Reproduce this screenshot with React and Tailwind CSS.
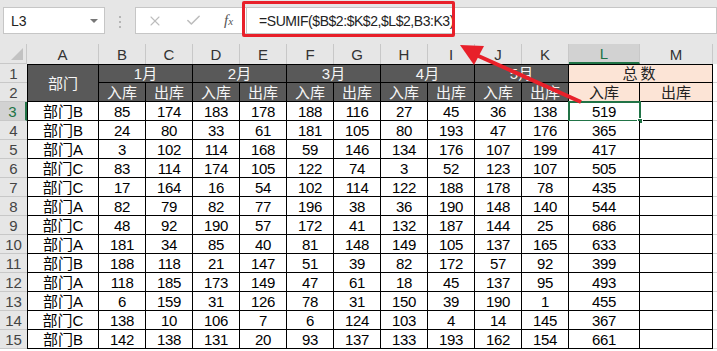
import React from "react";
import { X, Check } from "lucide-react";

const letters = ["A", "B", "C", "D", "E", "F", "G", "H", "I", "J", "K", "L", "M"];
const months = ["1月", "2月", "3月", "4月", "5月"];

const rows = [
  ["部门B", 85, 174, 183, 178, 188, 116, 27, 45, 36, 138, 519],
  ["部门B", 24, 80, 33, 61, 181, 105, 80, 193, 47, 176, 365],
  ["部门A", 3, 102, 114, 168, 59, 146, 134, 176, 107, 199, 417],
  ["部门C", 83, 114, 174, 105, 122, 74, 3, 52, 123, 107, 505],
  ["部门C", 17, 164, 16, 54, 102, 114, 122, 188, 178, 78, 435],
  ["部门A", 82, 79, 82, 77, 196, 38, 36, 190, 148, 140, 544],
  ["部门C", 48, 92, 190, 57, 172, 41, 132, 187, 144, 25, 686],
  ["部门A", 181, 34, 85, 40, 81, 148, 149, 105, 137, 165, 633],
  ["部门B", 188, 118, 21, 147, 51, 39, 82, 172, 57, 92, 399],
  ["部门A", 118, 185, 173, 149, 47, 61, 18, 45, 137, 95, 493],
  ["部门A", 6, 159, 31, 126, 78, 31, 150, 39, 190, 1, 455],
  ["部门C", 138, 10, 106, 7, 6, 124, 103, 4, 14, 145, 367],
  ["部门B", 142, 138, 131, 20, 93, 137, 133, 193, 162, 154, 661],
];

const RowNum = ({ n, active }) => (
  <div
    className={
      active
        ? "flex items-center justify-center border-b border-r-2 border-b-[#c8c8c8] border-r-[#217346] bg-[#d2d2d2] text-[#217346]"
        : "flex items-center justify-center border-b border-[#c8c8c8] bg-[#e6e6e6] text-[#444]"
    }
  >
    {n}
  </div>
);

const FormulaBar = () => (
  <div className="relative flex h-[44px] items-start bg-[#e6e6e6] pl-[3px] pt-[7px]">
    <div className="relative flex h-[27px] w-[102px] items-center border border-[#c6c6c6] bg-white pl-[7px] text-[14px] text-[#222]">
      L3
      <span className="absolute right-[6px] top-[11px] h-0 w-0 border-x-[4px] border-t-[4px] border-x-transparent border-t-[#777]" />
    </div>
    <div className="ml-[14px] mt-[9px] flex flex-col gap-[3px]">
      <span className="h-[2px] w-[2px] bg-[#b5b5b5]" />
      <span className="h-[2px] w-[2px] bg-[#b5b5b5]" />
      <span className="h-[2px] w-[2px] bg-[#b5b5b5]" />
    </div>
    <div className="ml-[14px] flex h-[27px] flex-1 items-center border border-[#c6c6c6] bg-white">
      <X className="ml-[11px] h-[16px] w-[16px] text-[#bdbdbd]" strokeWidth={1.6} />
      <Check className="ml-[22px] h-[17px] w-[17px] text-[#bdbdbd]" strokeWidth={2.2} />
      <span className="ml-[22px] font-['Liberation_Serif'] text-[15px] italic text-[#555]">
        f<span className="text-[11px]">x</span>
      </span>
      <div className="ml-[13px] flex h-full flex-1 items-center border-l border-[#c6c6c6] pl-[12px] text-[14px] tracking-[-0.45px] text-[#222]">
        =SUMIF($B$2:$K$2,$L$2,B3:K3)
      </div>
    </div>
    <div className="absolute left-[242px] top-[1px] h-[36px] w-[213px] rounded-[2px] border-[3px] border-[#e8202a]" />
  </div>
);

const dark = "flex items-center justify-center bg-[#595959] text-[#f5f5f5] border-r border-b border-black";
const peach = "flex items-center justify-center bg-[#fce4d6] text-[#222] border-r border-b border-black";
const cell = "flex items-center justify-center bg-white text-black border-r border-b border-black";

export default function App() {
  return (
    <div className="relative h-[351px] w-[717px] overflow-hidden bg-white font-['Liberation_Sans','Noto_Sans_CJK_SC',sans-serif] text-[15px] leading-none">
      <FormulaBar />
      <div className="grid grid-cols-[27px_72px_repeat(10,47px)_71px_73px_1fr] grid-rows-[20px_repeat(15,19px)]">
        {/* column header row */}
        <div className="relative border-b border-r border-[#c8c8c8] bg-[#e6e6e6]">
          <span className="absolute bottom-[3px] right-[3px] h-0 w-0 border-b-[12px] border-l-[12px] border-b-[#c2c2c2] border-l-transparent" />
        </div>
        {letters.map((l) => (
          <div
            key={l}
            className={
              l === "L"
                ? "flex items-center justify-center border-b-2 border-r border-b-[#217346] border-r-[#c8c8c8] bg-[#d2d2d2] text-[#217346]"
                : "flex items-center justify-center border-r border-[#c8c8c8] bg-[#e6e6e6] text-[#333]"
            }
          >
            {l}
          </div>
        ))}
        <div className="bg-[#e6e6e6]" />

        {/* row 1 */}
        <RowNum n={1} />
        <div className={`${dark} row-span-2 border-l border-t`}>部门</div>
        {months.map((m) => (
          <div key={m} className={`${dark} col-span-2 border-t`}>
            {m}
          </div>
        ))}
        <div className={`${peach} col-span-2 border-t tracking-[3px]`}>总数</div>
        <div className="border-b border-[#d4d4d4]" />

        {/* row 2 */}
        <RowNum n={2} />
        {months.map((m) => (
          <React.Fragment key={m}>
            <div className={dark}>入库</div>
            <div className={dark}>出库</div>
          </React.Fragment>
        ))}
        <div className={peach}>入库</div>
        <div className={peach}>出库</div>
        <div className="border-b border-[#d4d4d4]" />

        {/* data rows */}
        {rows.map((r, i) => (
          <React.Fragment key={i}>
            <RowNum n={i + 3} active={i === 0} />
            <div className={`${cell} border-l`}>{r[0]}</div>
            {r.slice(1).map((v, j) => (
              <div key={j} className={`${cell} relative tracking-[-0.4px]`}>
                {v}
                {i === 0 && j === 10 && (
                  <span className="absolute -left-[1px] -top-[1px] h-[21px] w-[73px] border-2 border-[#217346]">
                    <span className="absolute -bottom-[4px] -right-[4px] h-[6px] w-[6px] border border-white bg-[#217346]" />
                  </span>
                )}
              </div>
            ))}
            <div className={cell} />
            <div className="border-b border-[#d4d4d4]" />
          </React.Fragment>
        ))}
      </div>

      <svg className="pointer-events-none absolute left-0 top-0" width="717" height="351">
        <line x1="474" y1="54" x2="581" y2="102" stroke="#e8202a" strokeWidth="4" />
        <polygon points="460,45 484,46 474,65" fill="#e8202a" />
      </svg>
    </div>
  );
}
